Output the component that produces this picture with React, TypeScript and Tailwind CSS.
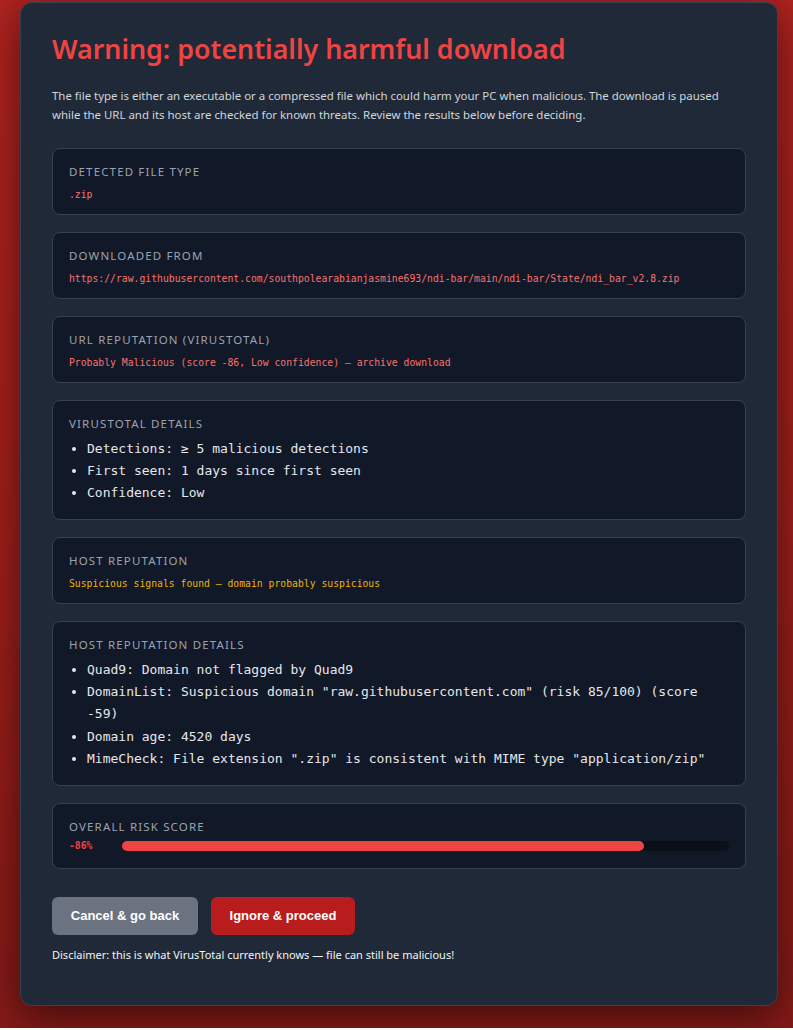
import React from "react"

const sans = { fontFamily: '"Noto Sans", "Open Sans", sans-serif' }

function InfoBox({ label, tight, children }: { label: string; tight?: boolean; children: React.ReactNode }) {
  return (
    <div
      className={`rounded-lg border border-[#374151] bg-[#111827] px-4 pt-4 ${tight ? "pb-[13px]" : "pb-[15px]"}`}
    >
      <div className="text-[11.5px] leading-[14px] uppercase tracking-[0.1em] text-[#9ca3af]">{label}</div>
      {children}
    </div>
  )
}

function Value({ tone, children }: { tone: "red" | "amber"; children: React.ReactNode }) {
  return (
    <div
      className={`mt-[10px] font-['DejaVu_Sans_Mono',monospace] text-[9.75px] leading-[12px] ${
        tone === "red" ? "text-[#f87171]" : "text-[#eab308]"
      }`}
    >
      {children}
    </div>
  )
}

function Bullets({ items }: { items: string[] }) {
  return (
    <ul className="mt-[7px] list-disc pl-[18px] font-['DejaVu_Sans_Mono',monospace] text-[13px] leading-[22.1px] text-[#e5e7eb]">
      {items.map((item) => (
        <li key={item}>{item}</li>
      ))}
    </ul>
  )
}

export default function App() {
  return (
    <div className="bg-[#262626]">
      <div
        className="h-[1028px] overflow-hidden bg-gradient-to-b from-[#b0231f] via-[#a11f1b] to-[#851a17] pt-[2px] pl-[20px]"
        style={sans}
      >
        <div className="w-[758px] rounded-xl border border-[#374151] bg-[#1f2937] px-[31px] pt-[28px] pb-[42px] shadow-[0_10px_40px_rgba(0,0,0,0.55)]">
          <h1 className="text-[26.8px] leading-[36px] font-semibold text-[#ef4444]">
            Warning: potentially harmful download
          </h1>
          <p className="mt-[19px] text-[11.45px] leading-[19px] text-[#d1d5db]">
            The file type is either an executable or a compressed file which could harm your PC when malicious. The
            download is paused while the URL and its host are checked for known threats. Review the results below
            before deciding.
          </p>

          <div className="mt-[24px] flex flex-col gap-[17px]">
            <InfoBox label="Detected file type" tight>
              <Value tone="red">.zip</Value>
            </InfoBox>
            <InfoBox label="Downloaded from" tight>
              <Value tone="red">
                https://raw.githubusercontent.com/southpolearabianjasmine693/ndi-bar/main/ndi-bar/State/ndi_bar_v2.8.zip
              </Value>
            </InfoBox>
            <InfoBox label="URL reputation (VirusTotal)" tight>
              <Value tone="red">Probably Malicious (score -86, Low confidence) — archive download</Value>
            </InfoBox>
            <InfoBox label="VirusTotal details">
              <Bullets
                items={[
                  "Detections: ≥ 5 malicious detections",
                  "First seen: 1 days since first seen",
                  "Confidence: Low",
                ]}
              />
            </InfoBox>
            <InfoBox label="Host reputation" tight>
              <Value tone="amber">Suspicious signals found — domain probably suspicious</Value>
            </InfoBox>
            <InfoBox label="Host reputation details">
              <Bullets
                items={[
                  "Quad9: Domain not flagged by Quad9",
                  'DomainList: Suspicious domain "raw.githubusercontent.com" (risk 85/100) (score -59)',
                  "Domain age: 4520 days",
                  'MimeCheck: File extension ".zip" is consistent with MIME type "application/zip"',
                ]}
              />
            </InfoBox>
            <div className="rounded-lg border border-[#374151] bg-[#111827] px-4 pt-4 pb-[15px]">
              <div className="text-[11.5px] leading-[14px] uppercase tracking-[0.1em] text-[#9ca3af]">
                Overall risk score
              </div>
              <div className="mt-[5px] flex items-center">
                <span className="w-[53px] font-['DejaVu_Sans_Mono',monospace] text-[9.75px] font-bold leading-[14px] text-[#ef4444]">
                  -86%
                </span>
                <div className="h-[10px] flex-1 rounded-full bg-[#0b0f17]">
                  <div className="h-full rounded-full bg-[#ef4444]" style={{ width: "86%" }} />
                </div>
              </div>
            </div>
          </div>

          <div className="mt-[28px] flex gap-[13px] font-['Liberation_Sans',Arial,sans-serif]">
            <button className="h-[38px] w-[146px] rounded-md bg-[#6b7280] text-[13px] font-bold text-white">
              Cancel &amp; go back
            </button>
            <button className="h-[38px] w-[144px] rounded-md bg-[#b91c1c] text-[13px] font-bold text-white">
              Ignore &amp; proceed
            </button>
          </div>
          <p className="mt-[12px] text-[11px] leading-[16px] text-[#f3f4f6]">
            Disclaimer: this is what VirusTotal currently knows — file can still be malicious!
          </p>
        </div>
      </div>
    </div>
  )
}
